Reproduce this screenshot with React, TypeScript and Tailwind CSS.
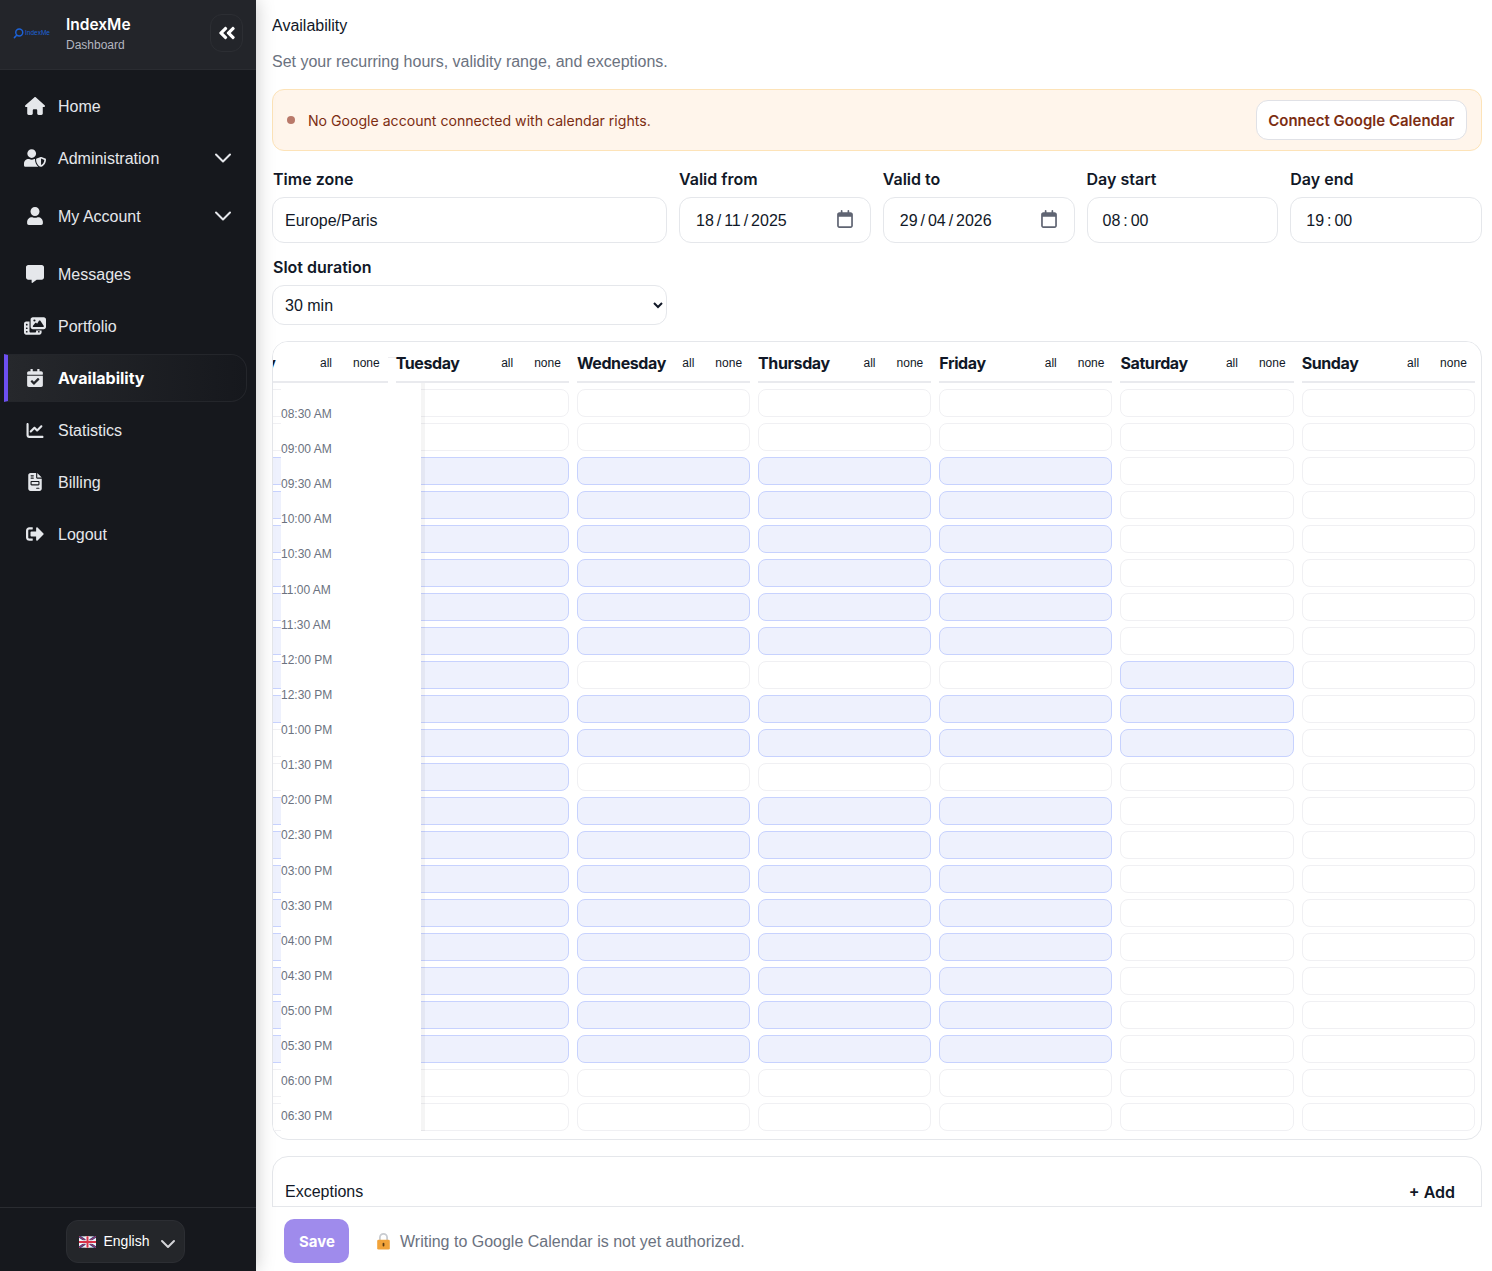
import {
  FaAngleDoubleLeft,
  FaCalendarCheck,
  FaCommentAlt,
  FaSignOutAlt,
  FaUser,
  FaUserShield,
} from 'react-icons/fa'
import {
  FaChartLine,
  FaFileInvoice,
  FaHouse,
  FaPhotoFilm,
  FaRegCalendar,
} from 'react-icons/fa6'
import { ChevronDown } from 'lucide-react'
import type { IconType } from 'react-icons'

const SANS = "font-['Liberation_Sans',Arial,sans-serif]"
const INTER = "font-['Inter',sans-serif]"

interface NavItem {
  label: string
  icon: IconType
  iconSize: string
  hasChildren?: boolean
  active?: boolean
}

const navItems: NavItem[] = [
  { label: 'Home', icon: FaHouse, iconSize: 'h-[18px] w-[20px]' },
  { label: 'Administration', icon: FaUserShield, iconSize: 'h-[18px] w-[22px]', hasChildren: true },
  { label: 'My Account', icon: FaUser, iconSize: 'h-[18px] w-[16px]', hasChildren: true },
  { label: 'Messages', icon: FaCommentAlt, iconSize: 'h-[18px] w-[18px]' },
  { label: 'Portfolio', icon: FaPhotoFilm, iconSize: 'h-[18px] w-[22px]' },
  { label: 'Availability', icon: FaCalendarCheck, iconSize: 'h-[18px] w-[16px]', active: true },
  { label: 'Statistics', icon: FaChartLine, iconSize: 'h-[17px] w-[18px]' },
  { label: 'Billing', icon: FaFileInvoice, iconSize: 'h-[18px] w-[14px]' },
  { label: 'Logout', icon: FaSignOutAlt, iconSize: 'h-[18px] w-[18px]' },
]

const days = ['Monday', 'Tuesday', 'Wednesday', 'Thursday', 'Friday', 'Saturday', 'Sunday']

const times = [
  '08:00 AM', '08:30 AM', '09:00 AM', '09:30 AM', '10:00 AM', '10:30 AM', '11:00 AM', '11:30 AM',
  '12:00 PM', '12:30 PM', '01:00 PM', '01:30 PM', '02:00 PM', '02:30 PM', '03:00 PM', '03:30 PM',
  '04:00 PM', '04:30 PM', '05:00 PM', '05:30 PM', '06:00 PM', '06:30 PM',
]

// rows picked per day, index into times
const fullDay = [2, 3, 4, 5, 6, 7, 8, 9, 10, 11, 12, 13, 14, 15, 16, 17, 18, 19]
const monday = fullDay.filter((i) => i !== 10 && i !== 11)
const weekDay = fullDay.filter((i) => i !== 8 && i !== 11)
const picked: number[][] = [monday, fullDay, weekDay, weekDay, weekDay, [8, 9, 10], []]

function Logo() {
  return (
    <div className="flex w-[40px] items-center">
      <svg viewBox="0 0 12 12" className="h-[11px] w-[11px] shrink-0 text-[#1d63d8]" fill="none" stroke="currentColor" strokeWidth="1.6">
        <circle cx="6.8" cy="5" r="3.8" />
        <path d="M4 8 1.5 10.5" strokeLinecap="round" />
      </svg>
      <span className={`${SANS} ml-[1px] text-[6.5px] leading-none whitespace-nowrap text-[#1d63d8]`}>IndexMe</span>
    </div>
  )
}

function UkFlag() {
  return (
    <svg viewBox="0 0 60 40" className="h-[12px] w-[17px]">
      <rect width="60" height="40" fill="#f4f4f6" />
      <path d="M0 0 60 40M60 0 0 40" stroke="#2b3f86" strokeWidth="9" />
      <path d="M0 0 60 40M60 0 0 40" stroke="#d8344a" strokeWidth="3" />
      <path d="M30 0v40M0 20h60" stroke="#f4f4f6" strokeWidth="13" />
      <path d="M30 0v40M0 20h60" stroke="#d8344a" strokeWidth="7" />
    </svg>
  )
}

function Lock() {
  return (
    <svg viewBox="0 0 16 20" className="block h-[18px] w-[15px]">
      <path d="M4 9V6a4 4 0 0 1 8 0v3" fill="none" stroke="#c9ccd1" strokeWidth="2" />
      <rect x="1" y="8.5" width="14" height="11" rx="1.5" fill="#f2a33a" />
      <rect x="7" y="12" width="2" height="4" rx="1" fill="#5b3a12" />
    </svg>
  )
}

function Sidebar() {
  return (
    <aside className={`${SANS} z-20 flex h-full w-[256px] shrink-0 flex-col bg-[#16181d] text-[#e5e7eb] shadow-[0_0_18px_rgba(0,0,0,0.22)]`}>
      <div className="flex h-[70px] items-center border-b border-[#2a2c31] bg-[#23252a] pr-[13px] pb-[3px] pl-[13px]">
        <Logo />
        <div className="mt-[2px] ml-[13px] flex flex-col">
          <span className={`${INTER} text-[15.5px] leading-[22px] font-semibold text-white`}>IndexMe</span>
          <span className="text-[12px] leading-[18px] text-[#b4b6c0]">Dashboard</span>
        </div>
        <button type="button" className="ml-auto flex h-[38px] w-[33px] items-center justify-center rounded-xl border border-[#2c2e33] text-white">
          <FaAngleDoubleLeft className="h-[20px] w-[20px]" />
        </button>
      </div>

      <nav className="flex flex-1 flex-col pt-[12px]">
        {navItems.map((item) => (
          <div key={item.label} className={`${item.hasChildren ? 'mb-[10px]' : 'mb-[4px]'} ml-[4px] flex h-[48px] items-center pr-[9px]`}>
            <div
              className={
                item.active
                  ? 'flex h-full w-full items-center rounded-r-2xl border border-l-4 border-[#24262b] border-l-[#6d4ff0] bg-gradient-to-r from-[#26282c] to-[#16181d] pl-[16px]'
                  : 'flex h-full w-full items-center pl-[20px]'
              }
            >
              <span className="flex w-[22px] shrink-0 justify-center">
                <item.icon className={item.iconSize} />
              </span>
              <span className={item.active ? `${INTER} ml-[12px] text-[16px] font-bold text-white` : 'mt-[2px] ml-[12px] text-[16px]'}>{item.label}</span>
              {item.hasChildren && <ChevronDown className="mr-[10px] ml-auto h-[28px] w-[28px]" strokeWidth={1.7} />}
            </div>
          </div>
        ))}
      </nav>

      <div className="flex h-[64px] items-center justify-center border-t border-[#2a2c31] pt-[4px] pr-[6px]">
        <div className="flex h-[43px] w-[119px] items-center rounded-xl border border-[#2c2e33] bg-[#24262a] pl-[12px] text-[14px] text-white">
          <UkFlag />
          <span className="ml-[8px]">English</span>
          <ChevronDown className="mt-[4px] ml-[7px] h-[24px] w-[24px] text-[#d4d4d8]" strokeWidth={2} />
        </div>
      </div>
    </aside>
  )
}

function Field({ label, inset, children }: { label: string; inset?: boolean; children: React.ReactNode }) {
  return (
    <div className="flex flex-col">
      <label className={`${INTER} ${inset ? 'pl-[1px]' : ''} mb-[8px] text-[16px] leading-[20px] font-semibold text-[#111827]`}>{label}</label>
      {children}
    </div>
  )
}

function DateBox({ value }: { value: string }) {
  return (
    <div className="flex h-[46px] items-center justify-between rounded-xl border border-[#e5e7eb] pt-[1px] pr-[17px] pl-[16px] text-[16px] text-[#111827]">
      <span className="[word-spacing:-1.5px]">{value}</span>
      <FaRegCalendar className="mb-[4px] h-[18px] w-[16px] text-[#5f6472]" />
    </div>
  )
}

function TimeBox({ value }: { value: string }) {
  return (
    <div className="flex h-[46px] items-center rounded-xl border border-[#e5e7eb] pt-[1px] pl-[15px] text-[16px] [word-spacing:-1.5px] text-[#111827]">
      {value}
    </div>
  )
}

function WeekGrid() {
  return (
    <div className="relative overflow-hidden rounded-2xl border border-[#e5e7eb]">
      {/* scrolled sideways in the reference, monday is mostly out of view */}
      <div className="ml-[-58.5px] grid w-max grid-cols-[repeat(7,173.2px)] gap-x-[8px] pb-[8px]">
        {days.map((day, d) => (
          <div key={day} className="flex flex-col">
            <div className="relative z-20 flex h-[41px] items-center justify-between border-b-2 border-[#e9eaee] bg-white pt-[2px]">
              <span className={`${INTER} text-[16px] font-bold tracking-[-0.4px] text-[#111827]`}>{day}</span>
              <div className="flex gap-[5px] text-[12px] text-[#111827]">
                <button type="button" className="px-[8px]">all</button>
                <button type="button" className="px-[8px]">none</button>
              </div>
            </div>
            <div className="mt-[6px] flex flex-col gap-[6px]">
              {times.map((time, i) => (
                <div
                  key={time}
                  className={
                    picked[d].includes(i)
                      ? 'h-[28px] rounded-lg border border-[#c7d2fe] bg-[#eef1fd]'
                      : 'h-[28px] rounded-lg border border-[#f0f0f3] bg-white'
                  }
                />
              ))}
            </div>
          </div>
        ))}
      </div>

      {/* sticky hour column, sits under the day headers */}
      <div className="absolute top-[15px] left-[8px] z-10 h-[774px] w-[140px] overflow-hidden border-t border-[#eeeef1] bg-white pt-[3.3px] shadow-[4px_0_0_rgba(0,0,0,0.04)]">
        {times.map((time) => (
          <div key={time} className="flex h-[35.14px] items-center text-[12px] text-[#6b7280]">
            {time}
          </div>
        ))}
      </div>
    </div>
  )
}

export default function App() {
  return (
    <div className={`${SANS} flex h-screen w-full overflow-hidden bg-white`}>
      <Sidebar />
      <main className="flex min-w-0 flex-1 flex-col pr-[10px] pl-[16px]">
        <div className="min-h-0 flex-1 overflow-hidden">
          <h1 className="pt-[16px] text-[16px] leading-[20px] font-normal text-[#111827]">Availability</h1>
          <p className="mt-[16px] text-[16px] leading-[20px] text-[#6b7280]">Set your recurring hours, validity range, and exceptions.</p>

          <div className="mt-[17px] flex h-[62px] items-center rounded-xl border border-[#fde3b8] bg-[#fff5eb] pr-[14px] pl-[14px]">
            <span className="h-[8px] w-[8px] rounded-full bg-[#b9796a]" />
            <span className={`${INTER} mt-[2px] ml-[13px] text-[14.1px] text-[#7c2d12]`}>No Google account connected with calendar rights.</span>
            <button type="button" className={`${INTER} ml-auto h-[40px] rounded-xl border border-[#e0e1e6] bg-white px-[11.5px] pt-[2px] text-[15px] font-semibold text-[#7c2d12]`}>
              Connect Google Calendar
            </button>
          </div>

          <div className="mt-[18px] grid grid-cols-[395px_1fr_1fr_1fr_1fr] gap-x-[12px] gap-y-[14px]">
            <Field label="Time zone" inset>
              <div className="flex h-[46px] items-center rounded-xl border border-[#e5e7eb] pt-[1px] pl-[12px] text-[16px] text-[#111827]">Europe/Paris</div>
            </Field>
            <Field label="Valid from">
              <DateBox value="18 / 11 / 2025" />
            </Field>
            <Field label="Valid to">
              <DateBox value="29 / 04 / 2026" />
            </Field>
            <Field label="Day start">
              <TimeBox value="08 : 00" />
            </Field>
            <Field label="Day end">
              <TimeBox value="19 : 00" />
            </Field>
            <Field label="Slot duration" inset>
              <select className="h-[40px] rounded-xl border border-[#e5e7eb] bg-white px-[8px] text-[16px] text-[#111827]" defaultValue="30">
                <option value="30">30 min</option>
              </select>
            </Field>
          </div>

          <div className="mt-[16px]">
            <WeekGrid />
          </div>

          <div className="mt-[16px] flex h-[80px] items-start justify-between rounded-2xl border border-[#e5e7eb] pt-[23px] pr-[26px] pl-[12px] text-[16px] text-[#111827]">
            <span>Exceptions</span>
            <span className={`${INTER} font-semibold`}>+ Add</span>
          </div>
        </div>

        <div className="flex h-[65px] shrink-0 items-center border-t border-[#e5e7eb] pt-[4px] pl-[12px]">
          <button type="button" className={`${INTER} h-[44px] w-[65px] rounded-[10px] bg-[#9f8bec] pt-[2px] pl-[1px] text-[15px] font-bold text-white`}>Save</button>
          <span className="ml-[27px]"><Lock /></span>
          <span className="mt-[2px] ml-[9px] text-[16px] text-[#6b7280]">Writing to Google Calendar is not yet authorized.</span>
        </div>
      </main>
    </div>
  )
}
